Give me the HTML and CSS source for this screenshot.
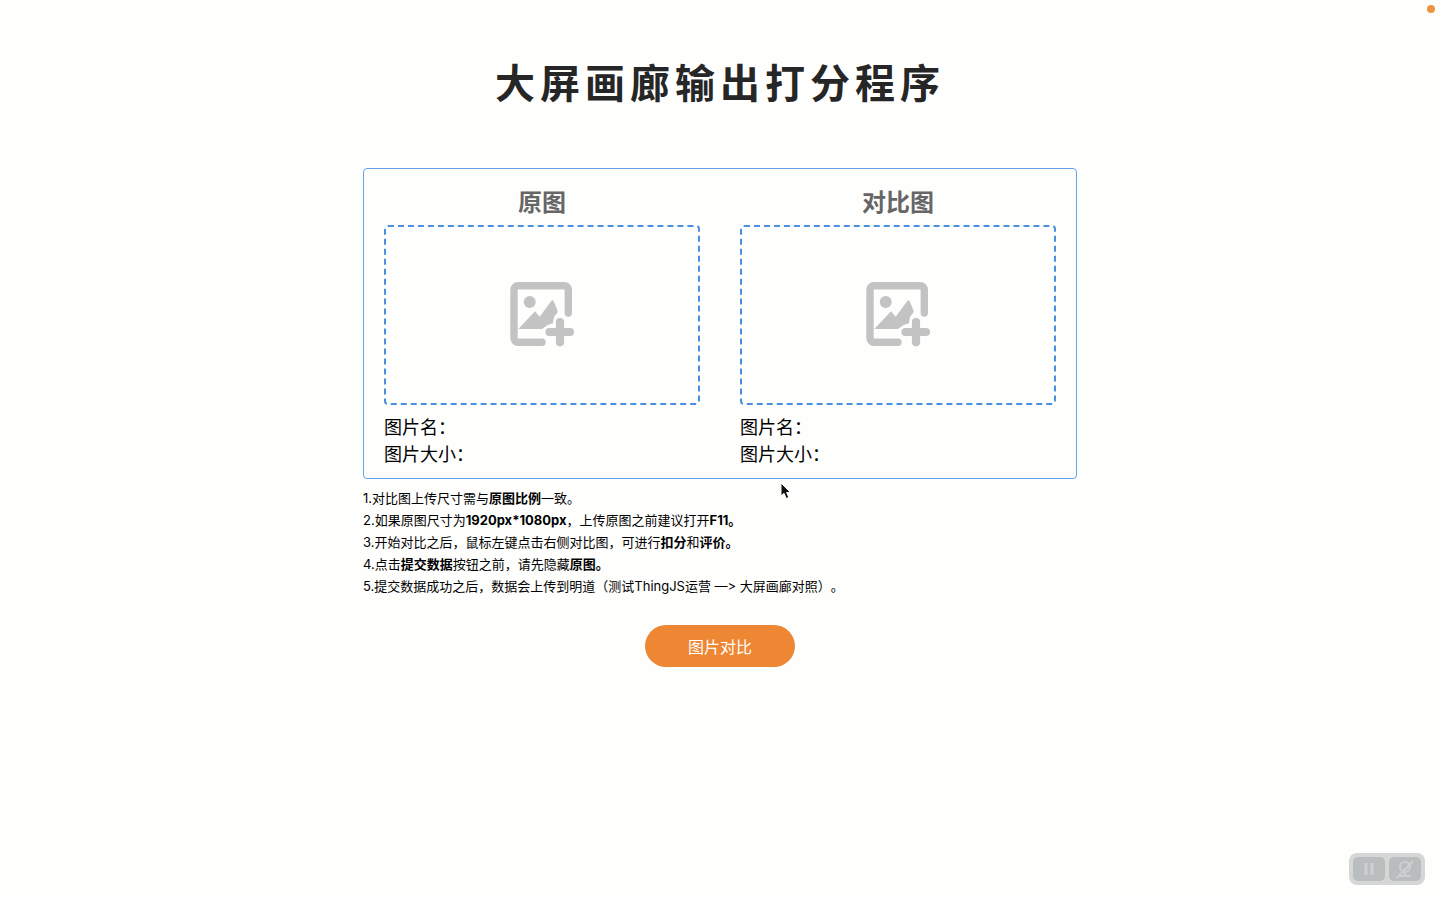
FILE: index.html
```html
<!DOCTYPE html>
<html lang="zh-CN">
	<head>
		<meta charset="utf-8"/>
		<meta name="viewport" content="width=device-width, initial-scale=1"/>
		<title>大屏画廊输出打分程序</title>
		<link rel="stylesheet" href="styles.css">
	</head>
	<body>
		<svg class="sprite" aria-hidden="true">
			<symbol id="addImage" viewBox="0 0 66 66">
				<path d="M59.300 31V7.700a4 4 0 0 0-4-4H9a4 4 0 0 0-4 4V56.300a4 4 0 0 0 4 4H33" fill="none" stroke="currentColor" stroke-width="7.400" stroke-linecap="round"/>
				<path d="M9.300 47L26 29.300 30.700 34.700 42.300 19Q43.700 17.500 44.800 19.500L48.700 29Q49 31 46 33.500 44.500 35 44 41.300L38.700 43 33 47Z" fill="currentColor"/>
				<circle cx="20.700" cy="20" r="6" fill="currentColor"/>
				<path d="M51 40V60.300M40.500 50H61" stroke="currentColor" stroke-width="8.200" stroke-linecap="round"/>
			</symbol>
		</svg>

		<main>
			<h1>大屏画廊输出打分程序</h1>
			<div class="panel">
				<section class="column">
					<h2>原图</h2>
					<label class="upload" for="originFile">
						<svg class="uploadIcon" role="img" aria-label="上传原图"><use href="#addImage"/></svg>
					</label>
					<input type="file" id="originFile" accept="image/*">
					<div class="info">
						<p>图片名：</p>
						<p>图片大小：</p>
					</div>
				</section>
				<section class="column">
					<h2>对比图</h2>
					<label class="upload" for="compareFile">
						<svg class="uploadIcon" role="img" aria-label="上传对比图"><use href="#addImage"/></svg>
					</label>
					<input type="file" id="compareFile" accept="image/*">
					<div class="info">
						<p>图片名：</p>
						<p>图片大小：</p>
					</div>
				</section>
			</div>
			<div class="notes">
				<p>1.对比图上传尺寸需与<b>原图比例</b>一致。</p>
				<p>2.如果原图尺寸为<b>1920px*1080px</b>，上传原图之前建议打开<b>F11。</b></p>
				<p>3.开始对比之后，鼠标左键点击右侧对比图，可进行<b>扣分</b>和<b>评价。</b></p>
				<p>4.点击<b>提交数据</b>按钮之前，请先隐藏<b>原图。</b></p>
				<p>5.提交数据成功之后，数据会上传到明道（测试ThingJS运营 —&gt; 大屏画廊对照）。</p>
			</div>
			<button type="button" class="compareBtn">图片对比</button>
		</main>

		<span class="recordDot"></span>
		<svg class="pointer" viewBox="0 0 12 18" aria-hidden="true">
			<path d="M1 1V14L4 11.300 6.300 16.500 8.800 15.400 6.600 10.500H10.500Z" fill="#111" stroke="#fff" stroke-width="1"/>
		</svg>
		<div class="recorder">
			<button type="button" aria-label="暂停">
				<svg viewBox="0 0 32 24"><path d="M13 6V18M19 6V18" stroke-width="3"/></svg>
			</button>
			<button type="button" aria-label="关闭摄像头">
				<svg viewBox="0 0 32 24">
					<circle cx="16" cy="10" r="5"/>
					<path d="M16 15V18M10 19H22M8 21L24 4"/>
				</svg>
			</button>
		</div>
	</body>
</html>
```

FILE: styles.css
```css
* {
	box-sizing: border-box;
}
body {
	margin: 0;
	background-color: #fefefd;
	color: #000;
	font-family: Inter, "Noto Sans CJK SC", sans-serif;
	font-variant-ligatures: none;
	text-spacing-trim: space-all;
}
h1, h2, p {
	margin: 0;
}
.sprite {
	display: none;
}
main {
	display: flex;
	flex-direction: column;
	width: 100%;
	max-width: 714px;
	margin: 0 auto;
	padding: 54px 0 40px;
}
h1 {
	margin-bottom: 54px;
	color: #262626;
	font-size: 40px;
	line-height: 60px;
	letter-spacing: 5px;
	text-align: center;
}
.panel {
	display: flex;
	gap: 40px;
	padding: 12px 20px 10px;
	border: 1px solid #64a2e8;
	border-radius: 4px;
}
.column {
	flex: 1;
}
h2 {
	color: #666;
	font-size: 24px;
	line-height: 44px;
	text-align: center;
}
.upload {
	display: flex;
	align-items: center;
	justify-content: center;
	height: 180px;
	border: 2px dashed #4a90e2;
	border-radius: 4px;
	cursor: pointer;
}
.uploadIcon {
	width: 66px;
	height: 66px;
	color: #c3c3c3;
}
input[type="file"] {
	display: none;
}
.info {
	margin-top: 9px;
	font-size: 18px;
	line-height: 27px;
}
.notes {
	margin-top: 8px;
	font-size: 13px;
	line-height: 22px;
}
.compareBtn {
	align-self: center;
	width: 150px;
	height: 42px;
	margin-top: 28px;
	border: none;
	border-radius: 21px;
	background-color: #ee8734;
	color: #fff;
	font-family: inherit;
	font-size: 16px;
	cursor: pointer;
}

/* screen recorder overlay */
.recordDot {
	position: fixed;
	top: 5px;
	right: 5px;
	width: 8px;
	height: 8px;
	border-radius: 50%;
	background-color: #ee9440;
}
.pointer {
	position: absolute;
	top: 482px;
	left: 780px;
	width: 12px;
	height: 18px;
}
.recorder {
	position: fixed;
	right: 15px;
	bottom: 15px;
	display: flex;
	gap: 4px;
	padding: 4px;
	border-radius: 8px;
	background-color: #d5d7d7;
}
.recorder button {
	width: 32px;
	height: 24px;
	padding: 0;
	border: none;
	border-radius: 5px;
	background-color: #b9bdbe;
}
.recorder svg {
	display: block;
	width: 100%;
	height: 100%;
	fill: none;
	stroke: #cdd0d0;
	stroke-width: 2;
}
```
